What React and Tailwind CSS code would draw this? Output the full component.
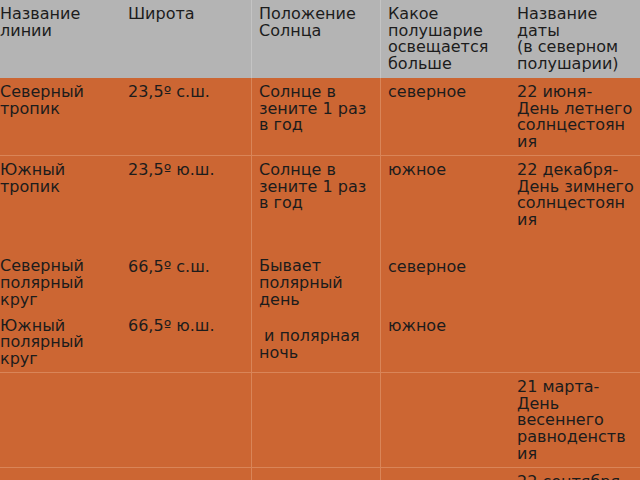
import React from "react";

const Lines = ({ lines, className = "" }) => (
  <div className={"whitespace-pre " + className}>
    {lines.map((l, i) => (
      <div key={i}>{l}</div>
    ))}
  </div>
);

const cols = "grid grid-cols-[121px_130px_129px_130px_130px]";
const c1 = "pt-[6px] pl-0";
const c = "pt-[6px] pl-[7px]";
const vb = "border-l border-[#d98558]";
const vbh = "border-l border-[#c4c4c4]";

export default function App() {
  return (
    <div className="w-[640px] h-[480px] overflow-hidden bg-[#cc6633] text-[#1c1c1c] font-['DejaVu_Sans',sans-serif] text-[16px] leading-[16.7px]">
      {/* header */}
      <div className={cols + " h-[78px] bg-[#b4b4b4]"}>
        <div className={c1}>
          <Lines lines={["Название", "линии"]} />
        </div>
        <div className={c}>
          <Lines lines={["Широта"]} />
        </div>
        <div className={c + " " + vbh}>
          <Lines lines={["Положение", "Солнца"]} />
        </div>
        <div className={c + " " + vbh}>
          <Lines lines={["Какое", "полушарие", "освещается", "больше"]} />
        </div>
        <div className={c}>
          <Lines lines={["Название", "даты", "(в северном", "полушарии)"]} />
        </div>
      </div>

      {/* row 1 */}
      <div className={cols + " h-[77px]"}>
        <div className={c1}>
          <Lines lines={["Северный", "тропик"]} />
        </div>
        <div className={c}>
          <Lines lines={["23,5º с.ш."]} />
        </div>
        <div className={c + " " + vb}>
          <Lines lines={["Солнце в", "зените 1 раз", "в год"]} />
        </div>
        <div className={c + " " + vb}>
          <Lines lines={["северное"]} />
        </div>
        <div className={c}>
          <Lines lines={["22 июня-", "День летнего", "солнцестоян", "ия"]} />
        </div>
      </div>

      {/* row 2 */}
      <div className={cols + " h-[217px] border-t border-[#d98558]"}>
        <div className={c1 + " pt-[5px]"}>
          <Lines lines={["Южный", "тропик"]} />
          <Lines className="mt-[63px]" lines={["Северный", "полярный", "круг"]} />
          <Lines className="mt-[9px]" lines={["Южный", "полярный", "круг"]} />
        </div>
        <div className={c + " pt-[5px]"}>
          <Lines lines={["23,5º ю.ш."]} />
          <Lines className="mt-[80px]" lines={["66,5º с.ш."]} />
          <Lines className="mt-[43px]" lines={["66,5º ю.ш."]} />
        </div>
        <div className={c + " pt-[5px] " + vb}>
          <Lines lines={["Солнце в", "зените 1 раз", "в год"]} />
          <Lines className="mt-[46px]" lines={["Бывает", "полярный", "день"]} />
          <Lines className="mt-[20px]" lines={[" и полярная", "ночь"]} />
        </div>
        <div className={c + " pt-[5px] " + vb}>
          <Lines lines={["южное"]} />
          <Lines className="mt-[80px]" lines={["северное"]} />
          <Lines className="mt-[43px]" lines={["южное"]} />
        </div>
        <div className={c + " pt-[5px]"}>
          <Lines lines={["22 декабря-", "День зимнего", "солнцестоян", "ия"]} />
        </div>
      </div>

      {/* row 3 */}
      <div className={cols + " h-[95px] border-t border-[#d98558]"}>
        <div className={c1}></div>
        <div className={c}></div>
        <div className={c + " " + vb}></div>
        <div className={c + " " + vb}></div>
        <div className={c}>
          <Lines lines={["21 марта-", "День", "весеннего", "равноденств", "ия"]} />
        </div>
      </div>

      {/* row 4 */}
      <div className={cols + " h-[60px] border-t border-[#d98558]"}>
        <div className={c1}></div>
        <div className={c}></div>
        <div className={c + " " + vb}></div>
        <div className={c + " " + vb}></div>
        <div className={c + " pt-[5px]"}>
          <Lines lines={["22 сентября-", "День", "осеннего"]} />
        </div>
      </div>
    </div>
  );
}
